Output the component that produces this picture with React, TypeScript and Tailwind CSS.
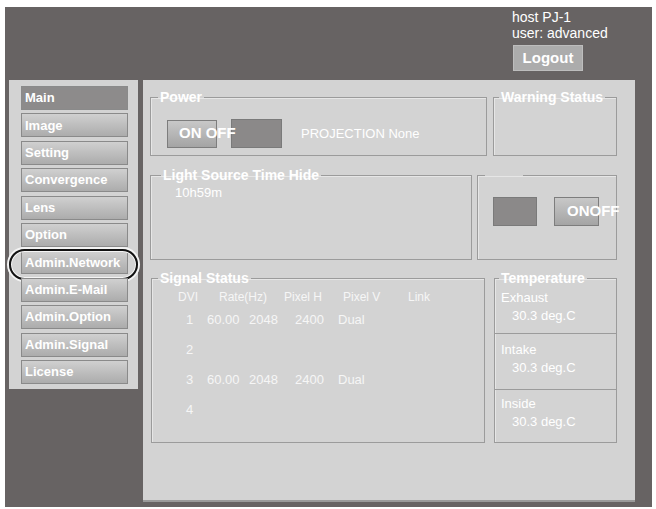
import React from "react";

const FONT = { fontFamily: '"Liberation Sans", Arial, sans-serif' };

const NAV = [
  "Main",
  "Image",
  "Setting",
  "Convergence",
  "Lens",
  "Option",
  "Admin.Network",
  "Admin.E-Mail",
  "Admin.Option",
  "Admin.Signal",
  "License",
];

const SIGNALS = [
  { n: "1", rate: "60.00", h: "2048", v: "2400", link: "Dual" },
  { n: "2", rate: "", h: "", v: "", link: "" },
  { n: "3", rate: "60.00", h: "2048", v: "2400", link: "Dual" },
  { n: "4", rate: "", h: "", v: "", link: "" },
];

// fieldset with the notched legend, like the original page
function Box({
  title,
  legendClass = "",
  className = "",
  children,
}: {
  title: string;
  legendClass?: string;
  className?: string;
  children?: React.ReactNode;
}) {
  return (
    <fieldset className={`border border-[#9b9b9b] shadow-[inset_1px_1px_0_#e6e6e6] ${className}`}>
      <legend className={`px-[2px] text-[14px] font-bold leading-[16px] text-white ${legendClass}`}>
        {title}
      </legend>
      {children}
    </fieldset>
  );
}

function Sidebar() {
  return (
    <div className="flex h-[309px] w-[129px] flex-col gap-[3.4px] bg-[#d3d3d3] pl-[12px] pt-[6px]">
      {NAV.map((item) => (
        <div key={item} className="relative">
          <div
            className={`flex h-[24px] w-[107px] items-center border border-[#8a8a8a] pl-[3px] text-[13px] font-bold text-white ${
              item === "Main"
                ? "bg-[#8d8b8b]"
                : "bg-linear-to-b from-[#d0d0d0] to-[#acacac]"
            }`}
          >
            {item}
          </div>
          {item === "Admin.Network" && (
            <div className="pointer-events-none absolute left-[-12px] top-[-1.5px] h-[31px] w-[129px] rounded-full border-2 border-[#111] shadow-[0_0_0_2px_#f4f4f4,inset_0_0_0_1px_#f4f4f4]" />
          )}
        </div>
      ))}
    </div>
  );
}

function MainPanel() {
  return (
    <div className="flex h-[420px] w-[492px] flex-col bg-[#d3d3d3] pl-[7px] pt-[9px] text-white shadow-[0_2px_0_#9a9a9a]">
      {/* Power / Warning */}
      <div className="flex gap-[6px]">
        <Box title="Power" legendClass="ml-[7px]" className="h-[67px] w-[337px]">
          <div className="mt-[14px] flex items-center pl-[16px]">
            <div className="relative z-10 flex h-[28px] w-[50px] items-center whitespace-nowrap border border-[#7d7d7d] bg-linear-to-b from-[#c8c8c8] to-[#a4a4a4] pl-[11px] text-[15px] font-bold">
              ON OFF
            </div>
            <div className="ml-[14px] h-[29px] w-[51px] border border-[#7a7a7a] bg-[#8b8989]" />
            <span className="ml-[19px] text-[13px]">PROJECTION None</span>
          </div>
        </Box>
        <Box title="Warning Status" legendClass="ml-[5px]" className="h-[67px] w-[124px]" />
      </div>

      {/* Light source / switch */}
      <div className="mt-[11px] flex gap-[5px]">
        <Box title="Light Source Time Hide" legendClass="ml-[10px]" className="h-[93px] w-[322px]">
          <div className="mt-[2px] pl-[24px] text-[13px] leading-[16px]">10h59m</div>
        </Box>
        <Box title={"\u00a0"} legendClass="ml-[7px] w-[38px]" className="h-[93px] w-[140px]">
          <div className="mt-[14px] flex pl-[15px]">
            <div className="h-[29px] w-[44px] border border-[#7a7a7a] bg-[#8b8989]" />
            <div className="ml-[17px] flex h-[29px] w-[45px] items-center whitespace-nowrap border border-[#7d7d7d] bg-linear-to-b from-[#c8c8c8] to-[#a4a4a4] pl-[12px] text-[15px] font-bold">
              ONOFF
            </div>
          </div>
        </Box>
      </div>

      {/* Signal / Temperature */}
      <div className="mt-[10px] flex gap-[9px] pl-[1px]">
        <Box title="Signal Status" legendClass="ml-[6px]" className="h-[173px] w-[334px]">
          <div className="mt-[3px] flex pl-[26px] text-[12px] leading-[16px] text-[#f6f6f6]">
            <span className="w-[41px]">DVI</span>
            <span className="w-[65px]">Rate(Hz)</span>
            <span className="w-[59px]">Pixel H</span>
            <span className="w-[65px]">Pixel V</span>
            <span>Link</span>
          </div>
          {SIGNALS.map((s) => (
            <div key={s.n} className="flex h-[30px] items-center pl-[34px] text-[13px] text-[#f6f6f6]">
              <span className="w-[21px]">{s.n}</span>
              <span className="w-[42px]">{s.rate}</span>
              <span className="w-[46px]">{s.h}</span>
              <span className="w-[43px]">{s.v}</span>
              <span>{s.link}</span>
            </div>
          ))}
        </Box>
        <Box title="Temperature" legendClass="ml-[4px]" className="h-[173px] w-[123px]">
          <div className="text-[13px] leading-[18px]">
            <div className="h-[47px] pl-[6px] pt-[2.5px]">
              <div>Exhaust</div>
              <div className="pl-[11px]">30.3 deg.C</div>
            </div>
            <div className="h-[56px] border-t border-[#9b9b9b] pl-[6px] pt-[7px]">
              <div>Intake</div>
              <div className="pl-[11px]">30.3 deg.C</div>
            </div>
            <div className="border-t border-[#9b9b9b] pl-[6px] pt-[5px]">
              <div>Inside</div>
              <div className="pl-[11px]">30.3 deg.C</div>
            </div>
          </div>
        </Box>
      </div>
    </div>
  );
}

export default function App() {
  return (
    <div className="h-[509px] w-[656px] bg-white pl-[5px] pt-[7px]" style={FONT}>
      <div className="flex h-[500px] w-[647px] flex-col bg-[#676363]">
        <div className="h-[73px] pl-[507px] pt-[2px] text-[14px] leading-[16px] text-white">
          <div>host PJ-1</div>
          <div>user: advanced</div>
          <div className="ml-[1px] mt-[4px] flex h-[26px] w-[70px] items-center justify-center border border-[#bdbdbd] bg-[#acacac] text-[15px] font-bold">
            Logout
          </div>
        </div>
        <div className="flex items-start gap-[5px] pl-[4px]">
          <Sidebar />
          <MainPanel />
        </div>
      </div>
    </div>
  );
}
